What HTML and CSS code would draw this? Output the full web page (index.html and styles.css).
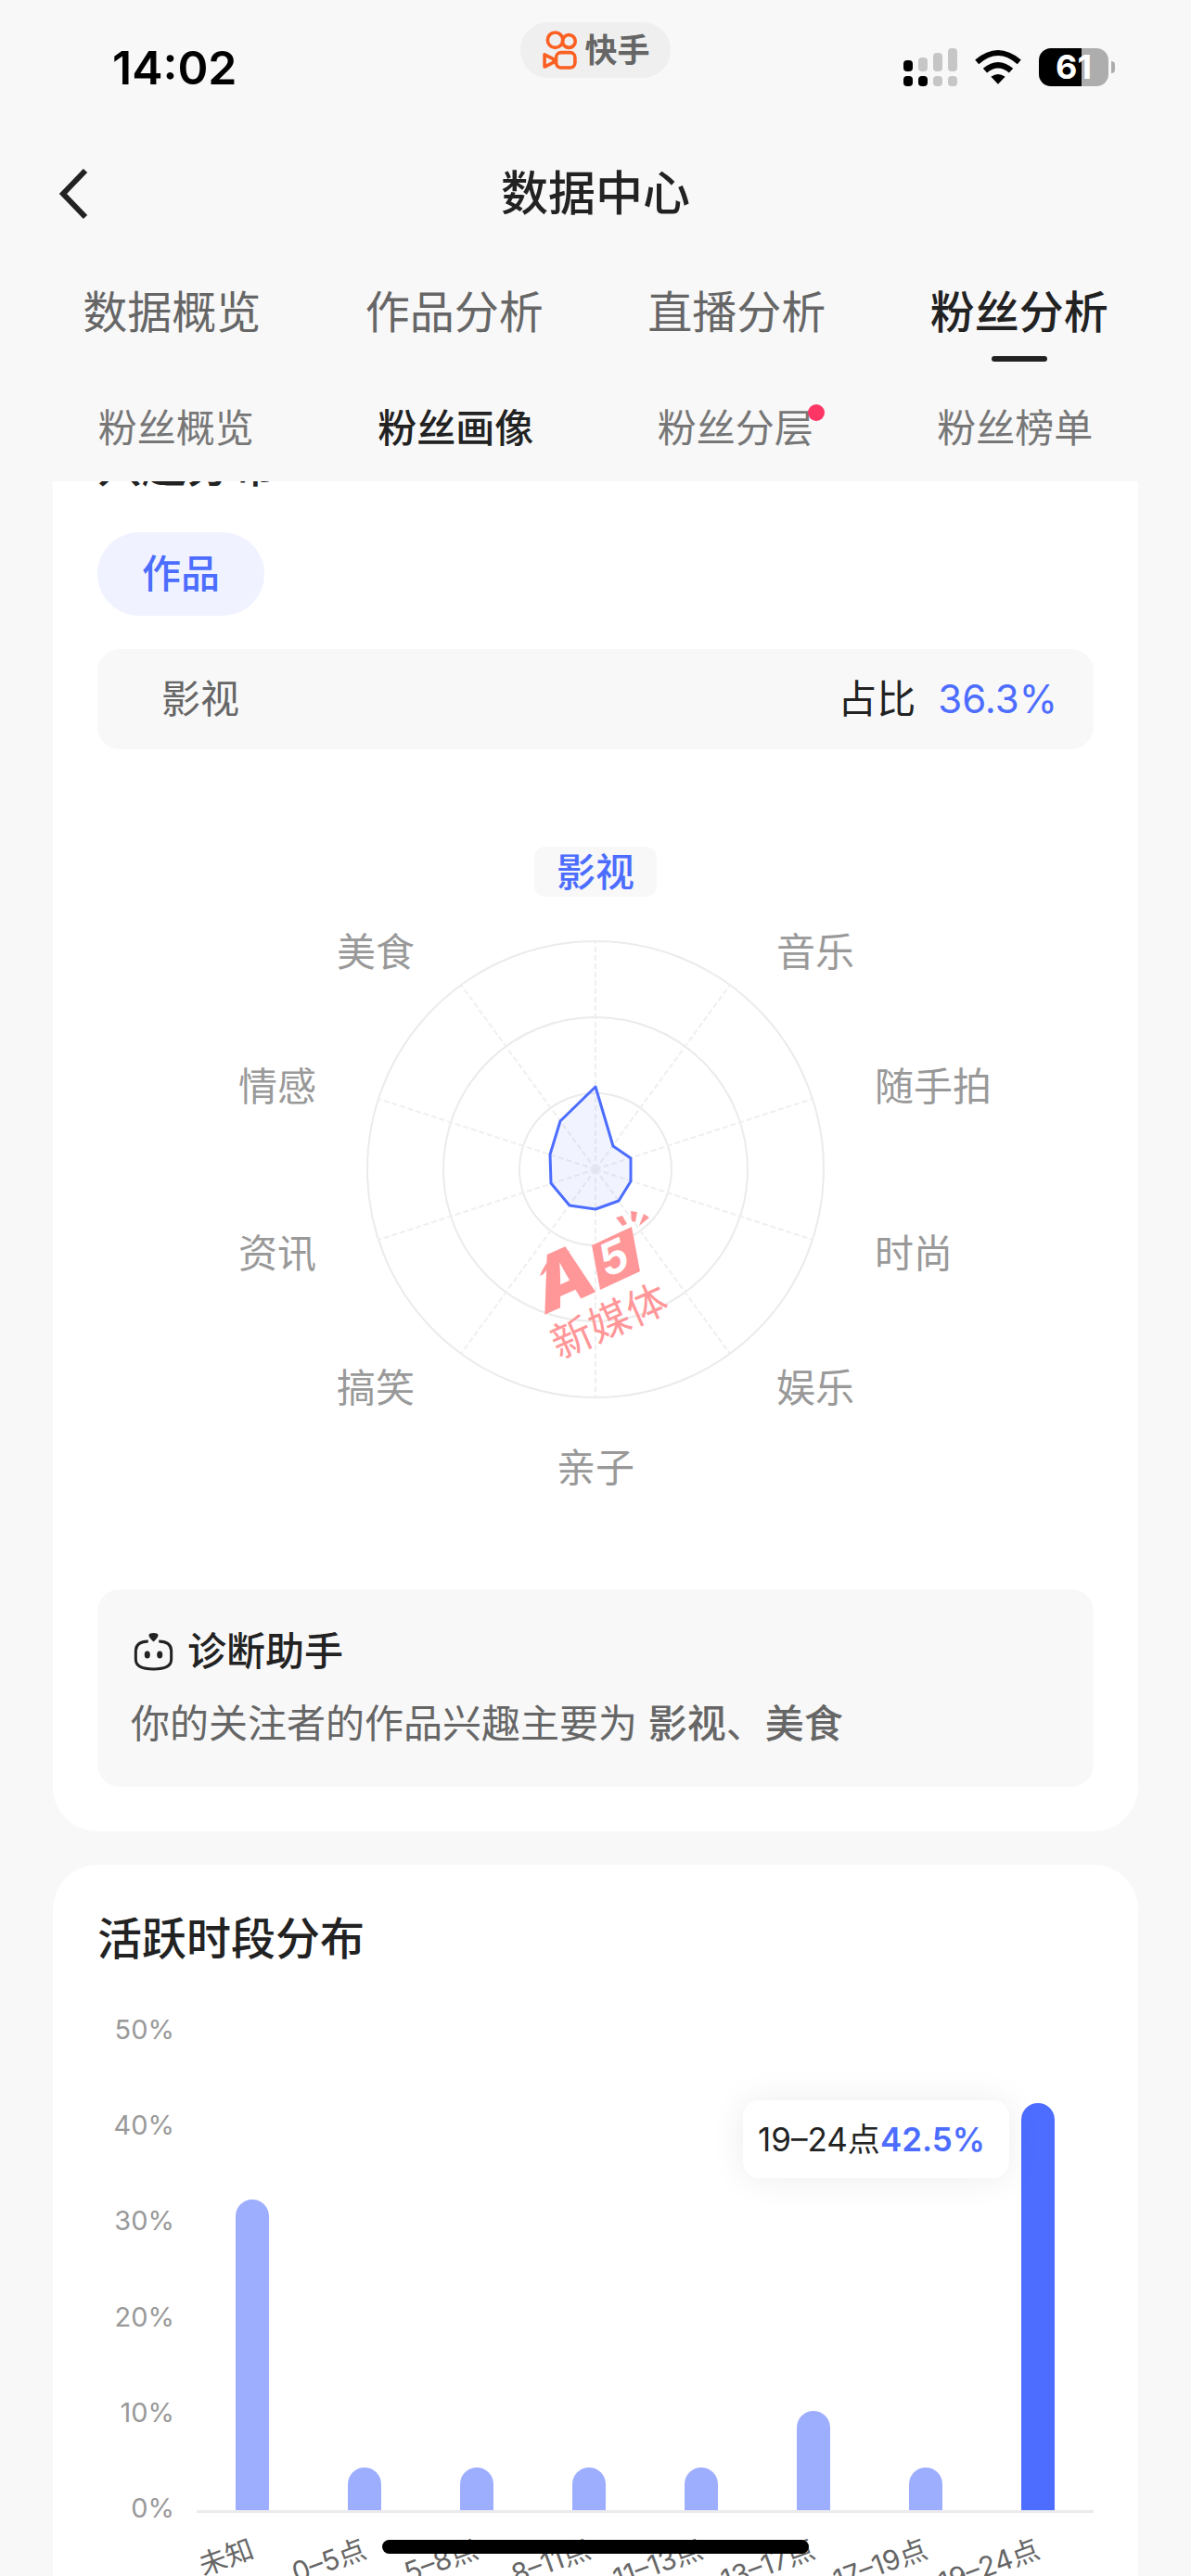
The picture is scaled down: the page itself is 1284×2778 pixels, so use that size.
FILE: index.html
```html
<!DOCTYPE html>
<html lang="zh-CN">
<head>
  <meta charset="UTF-8" />
  <meta name="viewport" content="width=device-width, initial-scale=1.0"/>
  <title>数据中心</title>
  <link rel="stylesheet" href="styles.css">
</head>
<body>

  <div class="app">

    <!-- Status bar -->
    <div class="status-bar">
      <div class="time">14:02</div>
      <div class="app-pill">
        <svg class="pill-logo" viewBox="104 47 112 128" fill="none" stroke="#fb5f22" stroke-width="11" stroke-linejoin="round">
          <circle cx="145" cy="78" r="25"/>
          <circle cx="190" cy="82" r="21"/>
          <rect x="148" y="119" width="62" height="50" rx="16"/>
          <path d="M110 126v40l30-15v-10z"/>
        </svg>
        <span>快手</span>
      </div>
      <div class="status-icons">
        <svg class="signal" viewBox="0 0 58 41">
          <g fill="#000">
            <rect x="0" y="13" width="10" height="12" rx="4"/>
            <rect x="0" y="30" width="10" height="11" rx="4"/>
            <rect x="16" y="30" width="10" height="11" rx="4"/>
          </g>
          <g fill="#c6c6c6">
            <rect x="16" y="10" width="10" height="15" rx="4"/>
            <rect x="32" y="5" width="10" height="20" rx="4"/>
            <rect x="48" y="0" width="10" height="25" rx="4"/>
            <rect x="32" y="30" width="10" height="11" rx="4"/>
            <rect x="48" y="30" width="10" height="11" rx="4"/>
          </g>
        </svg>
        <svg class="wifi" viewBox="0 0 150 112">
          <path d="M0 32Q75-32 150 32l-12 14Q75-10 12 46z"/>
          <path d="M26 60Q75 18 124 60l-13 14Q75 44 39 74z"/>
          <path d="M52 87Q75 70 98 87L75 111z"/>
        </svg>
        <div class="battery">61</div>
      </div>
    </div>

    <!-- Title bar -->
    <header class="title-bar">
      <button class="back" aria-label="返回">
        <svg viewBox="0 0 30 54" fill="none" stroke="#222" stroke-width="6"><path d="M28 2L4 27l24 25"/></svg>
      </button>
      <h1>数据中心</h1>
    </header>

    <nav class="tabs">
      <button>数据概览</button>
      <button>作品分析</button>
      <button>直播分析</button>
      <button class="active">粉丝分析</button>
    </nav>

    <nav class="sub-tabs">
      <button>粉丝概览</button>
      <button class="active">粉丝画像</button>
      <button><span class="has-dot">粉丝分层</span></button>
      <button>粉丝榜单</button>
    </nav>

    <main class="content">
      <div class="scrolled">

        <!-- Interests -->
        <section class="card">
          <h2>兴趣分布</h2>
          <button class="chip">作品</button>
          <div class="ratio-row">
            <span class="ratio-name">影视</span>
            <span>占比</span>
            <span class="ratio-value">36.3%</span>
          </div>

          <svg class="radar" viewBox="-537 -453 1074 906">
            <g class="radar-grid">
              <circle r="246"/>
              <circle r="164"/>
              <circle r="82"/>
              <path class="spokes" d="M0 0V-246M0 0L145-199M0 0L234-76M0 0L234 76M0 0L145 199M0 0V246M0 0L-145 199M0 0L-234 76M0 0L-234-76M0 0L-145-199"/>
            </g>
            <polygon class="radar-area" points="0,-89 19,-25 38,-12 38,13 25,34 0,43 -28,39 -48,15 -49,-16 -38,-52"/>

            <rect class="label-bg" x="-66" y="-348" width="132" height="54" rx="12"/>
            <g class="radar-labels">
              <text class="selected" x="0" y="-305" text-anchor="middle">影视</text>
              <text x="195" y="-219">音乐</text>
              <text x="301" y="-74">随手拍</text>
              <text x="301" y="106">时尚</text>
              <text x="195" y="251">娱乐</text>
              <text x="0" y="337" text-anchor="middle">亲子</text>
              <text x="-195" y="251" text-anchor="end">搞笑</text>
              <text x="-301" y="106" text-anchor="end">资讯</text>
              <text x="-301" y="-74" text-anchor="end">情感</text>
              <text x="-195" y="-219" text-anchor="end">美食</text>
            </g>

            <!-- Watermark -->
            <g class="watermark">
              <path d="M-60 115Q-50 88-27 88Q-46 96-56 113z"/>
              <path d="M-4 82L39 62L48 110L5 130z"/>
              <path d="M22 52l7-2 5 9-5 2zM38 45l7 1-2 11-4-1zM52 48l6 4-11 9z"/>
              <text class="wm-letter" transform="translate(-53 156) rotate(-24)">A</text>
              <text class="wm-digit" transform="translate(12 117) rotate(-24)">5</text>
              <text class="wm-name" transform="translate(-39 205) rotate(-24)">新媒体</text>
            </g>
          </svg>

          <div class="assistant">
            <h3>
              <svg viewBox="0 0 122 122">
                <path d="M44 27Q4 28 4 58v27q0 31 57 31t57-31V58Q118 28 78 27" fill="none" stroke="#222" stroke-width="9"/>
                <path d="M46 6Q48 0 61 0T76 6Q77 14 61 28Q45 14 46 6z" fill="#222"/>
                <ellipse cx="41" cy="70" rx="9" ry="12" fill="#222"/>
                <ellipse cx="81" cy="70" rx="9" ry="12" fill="#222"/>
              </svg>
              诊断助手
            </h3>
            <p>你的关注者的作品兴趣主要为 <strong>影视</strong>、<strong>美食</strong></p>
          </div>
        </section>

        <!-- Active hours -->
        <section class="card">
          <h2>活跃时段分布</h2>
          <div class="chart">
            <div class="y-axis">
              <span>50%</span>
              <span>40%</span>
              <span>30%</span>
              <span>20%</span>
              <span>10%</span>
              <span>0%</span>
            </div>
            <div class="plot">
              <div class="bars">
                <div class="bar" style="height: 64.6%"></div>
                <div class="bar" style="height: 8.8%"></div>
                <div class="bar" style="height: 8.8%"></div>
                <div class="bar" style="height: 8.8%"></div>
                <div class="bar" style="height: 8.8%"></div>
                <div class="bar" style="height: 20.6%"></div>
                <div class="bar" style="height: 8.8%"></div>
                <div class="bar current" style="height: 84.8%"></div>
              </div>
              <div class="x-axis">
                <span>未知</span>
                <span>0–5点</span>
                <span>5–8点</span>
                <span>8–11点</span>
                <span>11–13点</span>
                <span>13–17点</span>
                <span>17–19点</span>
                <span>19–24点</span>
              </div>
              <div class="tooltip">19–24点<strong>42.5%</strong></div>
            </div>
          </div>
        </section>

      </div>
    </main>

    <div class="home-indicator"></div>
  </div>

</body>
</html>
```
FILE: styles.css
```css
* { box-sizing: border-box; }
body { margin: 0; background: #f8f8f8; color: #222; font-family: Inter, "Noto Sans CJK SC", sans-serif; }
h1, h2, h3, p { margin: 0; }
button { border: 0; padding: 0; background: none; color: inherit; font: inherit; line-height: 60px; }
svg { display: block; overflow: visible; }

.app { height: 100vh; display: flex; flex-direction: column; overflow: hidden; }

/* status bar */
.status-bar { display: grid; grid-template-columns: 1fr auto 1fr; align-items: center; height: 145px; padding: 0 82px; color: #000; }
.time { padding-left: 39px; font-size: 50px; font-weight: 600; }
.app-pill { align-self: start; display: flex; align-items: center; gap: 8px; height: 60px; margin-top: 24px; padding: 0 22px 0 24px; border-radius: 30px; background: #efefef; color: #666; font-size: 35px; font-weight: 700; line-height: 60px; }
.pill-logo { width: 37px; height: 42px; }
.status-icons { display: flex; justify-content: flex-end; align-items: center; gap: 19px; }
.signal { width: 58px; height: 41px; }
.wifi { width: 50px; height: 37px; }
.battery { position: relative; width: 75px; height: 41px; margin-right: 7px; border-radius: 13px; background: linear-gradient(90deg, #000 61%, #adadad 61%); color: #fff; font-size: 36px; font-weight: 700; line-height: 41px; text-align: center; }
.battery::after { content: ""; position: absolute; top: 14px; right: -7px; width: 4px; height: 13px; border-radius: 0 4px 4px 0; background: #adadad; }

/* title and tabs */
.title-bar { position: relative; display: flex; justify-content: center; align-items: center; height: 128px; }
.title-bar h1 { font-size: 51px; font-weight: 500; line-height: 60px; }
.back { position: absolute; left: 64px; }
.back svg { width: 30px; height: 54px; }
.tabs, .sub-tabs { display: grid; grid-template-columns: repeat(4, 1fr); }
.tabs { height: 128px; padding: 0 33px; color: #666; font-size: 48px; }
.sub-tabs { height: 118px; padding: 4px 39px 0; color: #777; font-size: 42px; }
.tabs .active, .sub-tabs .active { position: relative; color: #222; font-weight: 500; }
.tabs .active::after { content: ""; position: absolute; left: 50%; bottom: 11px; width: 60px; height: 6px; margin-left: -30px; border-radius: 3px; background: #222; }
.has-dot { position: relative; }
.has-dot::after { content: ""; position: absolute; top: 0; right: -12px; width: 18px; height: 18px; border-radius: 50%; background: #fe3666; }

/* cards */
.content { flex: 1; min-height: 0; overflow: hidden; }
.scrolled { display: flex; flex-direction: column; gap: 36px; margin-top: -96px; padding: 0 57px; }
.card { padding: 50px 48px 48px; border-radius: 48px; background: #fff; }
.card h2 { font-size: 48px; font-weight: 500; line-height: 60px; }

.chip { display: block; height: 90px; margin: 41px 0 36px; padding: 0 48px; border-radius: 45px; background: #f0f3ff; color: #4c6dff; font-size: 42px; font-weight: 500; }
.ratio-row { display: flex; align-items: center; gap: 24px; height: 108px; padding: 0 39px 0 69px; border-radius: 24px; background: #f8f8f8; font-size: 42px; line-height: 60px; }
.ratio-name { flex: 1; color: #666; }
.ratio-value { color: #4c6dff; }

/* radar */
.radar { width: 100%; height: auto; }
.radar-grid { fill: none; stroke: #ebebeb; stroke-width: 2; }
.spokes { stroke: #efefef; stroke-dasharray: 6 3; }
.radar-area { fill: rgba(76, 109, 255, 0.08); stroke: #4c6dff; stroke-width: 3; stroke-linejoin: round; }
.radar-labels { fill: #999; font-size: 42px; }
.radar-labels .selected { fill: #4c6dff; font-weight: 500; }
.label-bg { fill: #f8f8f8; }
.watermark { fill: #ff9799; }
.wm-letter { font-size: 80px; font-weight: 900; font-style: italic; }
.wm-digit { fill: #fff; font-size: 48px; font-weight: 700; font-style: italic; }
.wm-name { font-size: 44px; font-weight: 400; }

/* assistant */
.assistant { padding: 37px 36px 38px; border-radius: 24px; background: #f8f8f8; font-size: 42px; }
.assistant h3 { display: flex; align-items: center; gap: 16px; padding-left: 4px; font-size: 42px; font-weight: 500; line-height: 60px; }
.assistant h3 svg { width: 41px; height: 41px; }
.assistant p { margin-top: 18px; color: #666; line-height: 60px; }
.assistant strong { font-weight: 500; }

/* bar chart */
.chart { display: flex; gap: 24px; margin-top: 50px; }
.y-axis { display: flex; flex-direction: column; justify-content: space-between; width: 83px; height: 552px; color: #999; font-size: 29px; line-height: 36px; text-align: right; }
.plot { position: relative; flex: 1; margin-top: 18px; }
.bars { display: grid; grid-template-columns: repeat(8, 1fr); justify-items: center; align-items: end; height: 521px; border-bottom: 3px solid #ebebee; }
.bar { width: 36px; border-radius: 18px 18px 0 0; background: #9eaeff; }
.bar.current { background: #4c6dff; }
.x-axis { display: grid; grid-template-columns: repeat(8, 1fr); height: 90px; margin-right: -6px; margin-left: 6px; padding-top: 18px; color: #666; font-size: 30px; line-height: 36px; }
.x-axis span { justify-self: end; margin-right: 50%; white-space: nowrap; transform: rotate(-20deg); transform-origin: 100% 50%; }
.tooltip { position: absolute; top: 76px; right: 91px; height: 84px; padding: 0 26px 0 16px; border-radius: 18px; background: #fff; box-shadow: 0 0 36px rgba(0, 0, 0, 0.08); font-size: 35px; line-height: 84px; }
.tooltip strong { color: #4c6dff; font-weight: 600; }

.home-indicator { position: fixed; left: 50%; bottom: 24px; width: 460px; height: 15px; margin-left: -230px; border-radius: 8px; background: #000; }
```
